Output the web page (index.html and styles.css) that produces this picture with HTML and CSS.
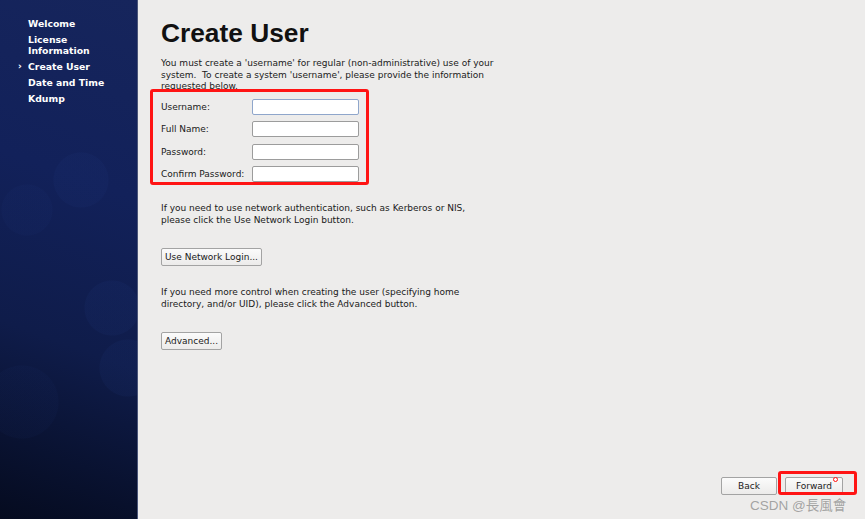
FILE: index.html
```html
<!DOCTYPE html>
<html>
<head>
<meta charset="utf-8">
<link rel="stylesheet" href="styles.css">
</head>
<body>
<div class="app">
  <aside class="sidebar">
    <ul class="steps">
      <li>Welcome</li>
      <li>License<br>Information</li>
      <li class="current">Create User</li>
      <li>Date and Time</li>
      <li>Kdump</li>
    </ul>
  </aside>
  <main class="main">
    <h1 class="title">Create User</h1>
    <p class="intro">You must create a 'username' for regular (non-administrative) use of your system.&nbsp; To create a system 'username', please provide the information requested below.</p>
    <div class="form">
      <label class="lbl">Username:</label><div class="input focus"></div>
      <label class="lbl">Full Name:</label><div class="input"></div>
      <label class="lbl">Password:</label><div class="input"></div>
      <label class="lbl">Confirm Password:</label><div class="input"></div>
    </div>
    <p class="note">If you need to use network authentication, such as Kerberos or NIS,<br>please click the Use Network Login button.</p>
    <div class="btnrow"><span class="btn">Use Network Login...</span></div>
    <p class="note note2">If you need more control when creating the user (specifying home<br>directory, and/or UID), please click the Advanced button.</p>
    <div class="btnrow"><span class="btn">Advanced...</span></div>
    <div class="footer">
      <span class="btn nav">Back</span>
      <span class="btn nav fwd">Forward</span>
    </div>
  </main>
</div>
<div class="mark mark-form"></div>
<div class="mark mark-fwd"></div>
<div class="dot"></div>
<div class="watermark">CSDN @長風會</div>
</body>
</html>
```

FILE: styles.css
```css
html, body {
  margin: 0;
  padding: 0;
  width: 865px;
  height: 519px;
  overflow: hidden;
  font-family: "DejaVu Sans", sans-serif;
}
.app {
  display: flex;
  width: 865px;
  height: 519px;
}
.sidebar {
  width: 137px;
  flex: none;
  border-right: 1px solid #4a5578;
  background:
    radial-gradient(circle at 81px 180px, rgba(40,70,150,0.08) 27px, transparent 28px),
    radial-gradient(circle at 27px 210px, rgba(40,70,150,0.06) 25px, transparent 26px),
    radial-gradient(circle at 112px 308px, rgba(40,70,150,0.09) 27px, transparent 28px),
    radial-gradient(circle at 128px 368px, rgba(40,70,150,0.09) 28px, transparent 29px),
    radial-gradient(circle at 22px 402px, rgba(40,70,150,0.05) 36px, transparent 37px),
    linear-gradient(200deg, #16255c 0%, #12215a 35%, #0f1c4a 65%, #050b1f 100%);
  color: #fff;
}
.steps {
  list-style: none;
  margin: 0;
  padding: 18px 0 0 28px;
  font-weight: bold;
  font-size: 9.3px;
  line-height: 11px;
}
.steps li {
  margin-bottom: 5px;
  position: relative;
}
.steps li.current::before {
  content: "›";
  position: absolute;
  left: -10px;
  top: -1px;
}
.main {
  flex: 1;
  display: flex;
  flex-direction: column;
  background: #edeceb;
  padding: 0 22px 24px 23px;
  color: #1a1a1a;
  font-size: 9px;
}
.title {
  margin: 17px 0 0 0;
  font-family: "Liberation Sans", Arial, sans-serif;
  font-size: 26.3px;
  line-height: 32px;
  font-weight: bold;
  color: #111;
}
.intro {
  margin: 9px 0 0 0;
  width: 355px;
  line-height: 11.5px;
}
.form {
  margin-top: 6px;
  display: grid;
  grid-template-columns: 91px 107px;
  row-gap: 6.5px;
  align-items: center;
}
.lbl {
  line-height: 16px;
}
.input {
  height: 14px;
  border: 1px solid #9c9c9c;
  border-radius: 2px;
  background: #fff;
}
.input.focus {
  border-color: #8fa6cb;
}
.note {
  margin: 21px 0 0 0;
  line-height: 11.5px;
}
.note2 {
  margin-top: 21px;
}
.btnrow {
  margin-top: 22px;
  display: flex;
}
.btn {
  display: inline-block;
  height: 16px;
  line-height: 16px;
  padding: 0 3px;
  border: 1px solid #a3a3a3;
  border-radius: 2px;
  background: linear-gradient(#fbfbfb, #ecebea);
  color: #1a1a1a;
}
.footer {
  margin-top: auto;
  display: flex;
  justify-content: flex-end;
  gap: 8px;
}
.btn.nav {
  width: 54px;
  padding: 0;
  text-align: center;
}
.btn.fwd {
  width: 56px;
}
.mark {
  position: absolute;
  border: 3px solid #ff1414;
  border-radius: 3px;
  box-sizing: border-box;
}
.mark-form {
  left: 150px;
  top: 89px;
  width: 219px;
  height: 96px;
}
.mark-fwd {
  left: 778px;
  top: 471px;
  width: 79px;
  height: 24px;
}
.dot {
  position: absolute;
  left: 833px;
  top: 477px;
  width: 3px;
  height: 3px;
  border: 1px solid #ff1414;
  border-radius: 50%;
  background: #fff;
}
.watermark {
  position: absolute;
  left: 750px;
  top: 494px;
  font-family: "Liberation Sans", "Noto Sans CJK TC", sans-serif;
  font-size: 13.5px;
  color: rgba(130,130,130,0.7);
  white-space: nowrap;
}
```
